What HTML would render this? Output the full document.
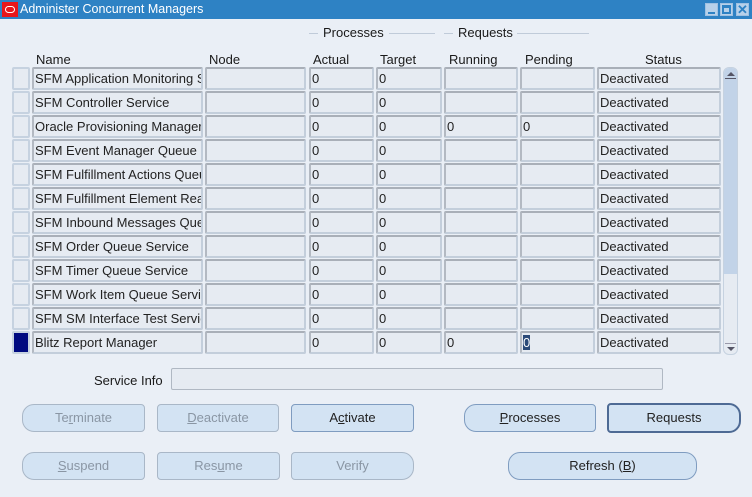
<!DOCTYPE html>
<html><head><style>
*{margin:0;padding:0;box-sizing:border-box}
body{width:752px;height:497px;background:#eaeff6;font-family:"Liberation Sans",Arial,sans-serif;font-size:13px;color:#1a1a1a;position:relative;overflow:hidden}
.a{position:absolute}
.title{left:0;top:0;width:752px;height:19px;background:#2e82c4;color:#fff;font-size:12.5px;line-height:19px}
.logo{left:2px;top:2px;width:16px;height:15px;background:#e8161b}
.logo:after{content:"";position:absolute;left:3px;top:4px;width:8px;height:5px;border:1.5px solid #fff;border-radius:4px}
.wb{top:3px;width:13px;height:13px;background:#b7d1ea;border:1px solid #9fc1e2}
.f{position:absolute;height:23px;background:#e6ebf2;border:2px solid #c3cedb;border-top-color:#a9afb8;border-left-color:#b3b9c2;border-radius:2px;line-height:20px;padding-left:1px;white-space:nowrap;overflow:hidden;color:#222}
.sel{position:absolute;width:18px;height:23px;background:#e6ebf2;border:2px solid #c6d2e0;border-radius:2px}
.h{position:absolute;top:52px;font-size:13px}
.btn{position:absolute;height:28px;background:#d3e3f3;border:1px solid #7f9cc0;border-radius:4px;text-align:center;line-height:26px;color:#222}
.dis{color:#8a96a4;border-color:#a9b7c7}
.ln{position:absolute;height:1px;background:#c0cbd9;top:33px}
</style></head><body>
<div class="a title"><div class="a logo"></div><span style="position:absolute;left:20px">Administer Concurrent Managers</span>
<div class="a wb" style="left:705px"><div class="a" style="left:2px;top:8px;width:7px;height:2px;background:#2e82c4"></div></div>
<div class="a wb" style="left:720px"><div class="a" style="left:1px;top:1px;width:9px;height:9px;border:2px solid #2e82c4;border-top-width:3px"></div></div>
<div class="a wb" style="left:736px;color:#2e82c4;font-weight:bold;font-size:13px;line-height:11px;text-align:center">✕</div>
</div>
<div class="ln" style="left:309px;width:9px"></div><div class="a" style="left:323px;top:25px">Processes</div><div class="ln" style="left:389px;width:46px"></div>
<div class="ln" style="left:444px;width:9px"></div><div class="a" style="left:458px;top:25px">Requests</div><div class="ln" style="left:517px;width:72px"></div>
<div class="h" style="left:36px">Name</div><div class="h" style="left:209px">Node</div><div class="h" style="left:313px">Actual</div><div class="h" style="left:380px">Target</div><div class="h" style="left:449px">Running</div><div class="h" style="left:525px">Pending</div><div class="h" style="left:645px">Status</div>
<div id="rows"></div>
<script>
var n=["SFM Application Monitoring Service","SFM Controller Service","Oracle Provisioning Manager","SFM Event Manager Queue Service","SFM Fulfillment Actions Queue","SFM Fulfillment Element Ready","SFM Inbound Messages Queue","SFM Order Queue Service","SFM Timer Queue Service","SFM Work Item Queue Service","SFM SM Interface Test Service","Blitz Report Manager"];
var h="";
for(var i=0;i<12;i++){var y=67+i*24;var r=(i==2||i==11)?"0":"";
h+='<div class="sel" style="left:12px;top:'+y+'px;'+(i==11?'background:#000a80;border-color:#c6d2e0':'')+'"></div>';
h+='<div class="f" style="left:32px;top:'+y+'px;width:171px">'+n[i]+'</div>';
h+='<div class="f" style="left:205px;top:'+y+'px;width:101px"></div>';
h+='<div class="f" style="left:309px;top:'+y+'px;width:65px">0</div>';
h+='<div class="f" style="left:376px;top:'+y+'px;width:66px">0</div>';
h+='<div class="f" style="left:444px;top:'+y+'px;width:74px">'+r+'</div>';
h+='<div class="f" style="left:520px;top:'+y+'px;width:75px">'+(i==11?'<span style="background:#2b4a78;color:#fff">0</span>':r)+'</div>';
h+='<div class="f" style="left:597px;top:'+y+'px;width:124px">Deactivated</div>';}
document.getElementById("rows").innerHTML=h;
</script>
<div class="a" style="left:723px;top:67px;width:15px;height:288px;border:1px solid #c6d2e0;border-radius:6px;background:#e6ebf2;overflow:hidden">
<div class="a" style="left:0;top:0;width:13px;height:206px;background:#c2d3e8"></div>
<div class="a" style="left:3px;top:4px;width:0;height:0;border-left:4px solid transparent;border-right:4px solid transparent;border-bottom:4px solid #556"></div>
<div class="a" style="left:1px;top:10px;width:11px;height:1px;background:#556"></div>
<div class="a" style="left:1px;top:275px;width:11px;height:1px;background:#99a"></div>
<div class="a" style="left:3px;top:279px;width:0;height:0;border-left:4px solid transparent;border-right:4px solid transparent;border-top:4px solid #556"></div>
</div>
<div class="a" style="left:94px;top:373px">Service Info</div>
<div class="f" style="left:171px;top:368px;width:492px;height:22px;border-width:1px;border-color:#b0b8c3"></div>
<div class="btn dis" style="left:22px;top:404px;width:123px;border-radius:12px 4px 4px 12px">Te<u>r</u>minate</div>
<div class="btn dis" style="left:157px;top:404px;width:122px"><u>D</u>eactivate</div>
<div class="btn" style="left:291px;top:404px;width:123px">A<u>c</u>tivate</div>
<div class="btn" style="left:464px;top:404px;width:132px;border-radius:12px 4px 4px 12px"><u>P</u>rocesses</div>
<div class="btn" style="left:607px;top:403px;width:134px;height:30px;border:2px solid #4e6a94;border-radius:4px 12px 12px 4px">Requests</div>
<div class="btn dis" style="left:22px;top:452px;width:123px;border-radius:12px 4px 4px 12px"><u>S</u>uspend</div>
<div class="btn dis" style="left:157px;top:452px;width:123px">Res<u>u</u>me</div>
<div class="btn dis" style="left:291px;top:452px;width:123px;border-radius:4px 12px 12px 4px">Verify</div>
<div class="btn" style="left:508px;top:452px;width:189px;border-radius:12px">Refresh (<u>B</u>)</div>
</body></html>
